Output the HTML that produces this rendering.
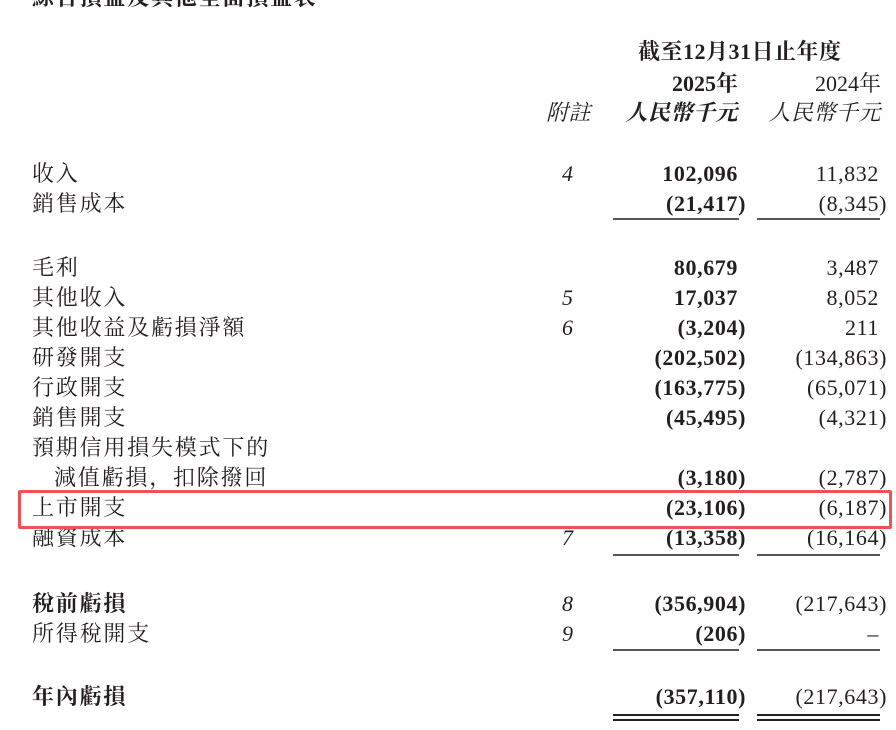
<!DOCTYPE html>
<html><head><meta charset="utf-8"><style>
html,body{margin:0;padding:0;background:#fff;width:896px;height:730px;overflow:hidden;position:relative}
.t{position:absolute;white-space:nowrap;font-family:"Liberation Serif","Noto Serif CJK SC",serif;color:#231f20;font-size:22px;line-height:24px;letter-spacing:1.8px}
.l{left:32px}
.n{position:absolute;white-space:nowrap;font-family:"Liberation Serif",serif;font-size:22px;line-height:24px;color:#231f20;letter-spacing:0.6px}
.b{font-weight:bold}
.c1{right:150px}
.c2{right:9px}
.np{margin-right:8px}
.note{position:absolute;left:562px;font-family:"Liberation Serif",serif;font-style:italic;font-size:22px;line-height:24px;color:#231f20}
.ln{position:absolute;height:1.5px;background:#555}
.u1{left:613px;width:126px}
.u2{left:757px;width:123px}
</style></head><body>
<div class="t b" style="left:32px;top:-14px">綜合損益及其他全面損益表</div>

<div class="t b" style="left:638px;top:40px;letter-spacing:0.5px">截至12月31日止年度</div>
<div class="t b" style="right:158px;top:72px;letter-spacing:0">2025年</div>
<div class="t" style="right:15px;top:72px;letter-spacing:0">2024年</div>
<div class="t" style="left:546px;top:101px;font-style:italic;letter-spacing:0.5px">附註</div>
<div class="t b" style="right:158px;top:101px;font-style:italic;letter-spacing:0.5px">人民幣千元</div>
<div class="t" style="right:15px;top:101px;font-style:italic;letter-spacing:0.5px">人民幣千元</div>

<div class="t l" style="top:162px">收入</div><div class="note" style="top:162px">4</div>
<div class="n b c1 np" style="top:162px">102,096</div><div class="n c2 np" style="top:162px">11,832</div>
<div class="t l" style="top:192px">銷售成本</div>
<div class="n b c1" style="top:192px">(21,417)</div><div class="n c2" style="top:192px">(8,345)</div>
<div class="ln u1" style="top:218px"></div><div class="ln u2" style="top:218px"></div>

<div class="t l" style="top:256px">毛利</div>
<div class="n b c1 np" style="top:256px">80,679</div><div class="n c2 np" style="top:256px">3,487</div>
<div class="t l" style="top:286px">其他收入</div><div class="note" style="top:286px">5</div>
<div class="n b c1 np" style="top:286px">17,037</div><div class="n c2 np" style="top:286px">8,052</div>
<div class="t l" style="top:316px">其他收益及虧損淨額</div><div class="note" style="top:316px">6</div>
<div class="n b c1" style="top:316px">(3,204)</div><div class="n c2 np" style="top:316px">211</div>
<div class="t l" style="top:346px">研發開支</div>
<div class="n b c1" style="top:346px">(202,502)</div><div class="n c2" style="top:346px">(134,863)</div>
<div class="t l" style="top:376px">行政開支</div>
<div class="n b c1" style="top:376px">(163,775)</div><div class="n c2" style="top:376px">(65,071)</div>
<div class="t l" style="top:406px">銷售開支</div>
<div class="n b c1" style="top:406px">(45,495)</div><div class="n c2" style="top:406px">(4,321)</div>
<div class="t l" style="top:436px">預期信用損失模式下的</div>
<div class="t" style="left:54px;top:466px">減值虧損，扣除撥回</div>
<div class="n b c1" style="top:466px">(3,180)</div><div class="n c2" style="top:466px">(2,787)</div>
<div class="t l" style="top:496px">上市開支</div>
<div class="n b c1" style="top:496px">(23,106)</div><div class="n c2" style="top:496px">(6,187)</div>
<div class="t l" style="top:526px">融資成本</div><div class="note" style="top:526px">7</div>
<div class="n b c1" style="top:526px">(13,358)</div><div class="n c2" style="top:526px">(16,164)</div>
<div class="ln u1" style="top:554px"></div><div class="ln u2" style="top:554px"></div>

<div class="t l b" style="top:592px">稅前虧損</div><div class="note" style="top:592px">8</div>
<div class="n b c1" style="top:592px">(356,904)</div><div class="n c2" style="top:592px">(217,643)</div>
<div class="t l" style="top:622px">所得稅開支</div><div class="note" style="top:622px">9</div>
<div class="n b c1" style="top:622px">(206)</div><div class="n c2 np" style="top:622px">–</div>
<div class="ln u1" style="top:649px"></div><div class="ln u2" style="top:649px"></div>

<div class="t l b" style="top:685px">年內虧損</div>
<div class="n b c1" style="top:685px">(357,110)</div><div class="n c2" style="top:685px">(217,643)</div>
<div class="ln u1" style="top:714px;height:2px;background:#222"></div><div class="ln u2" style="top:714px;height:2px;background:#222"></div>
<div class="ln u1" style="top:719px;height:2px;background:#222"></div><div class="ln u2" style="top:719px;height:2px;background:#222"></div>

<div style="position:absolute;left:18px;top:490px;width:868px;height:33px;border:3px solid #f05252;border-radius:2px"></div>
</body></html>
